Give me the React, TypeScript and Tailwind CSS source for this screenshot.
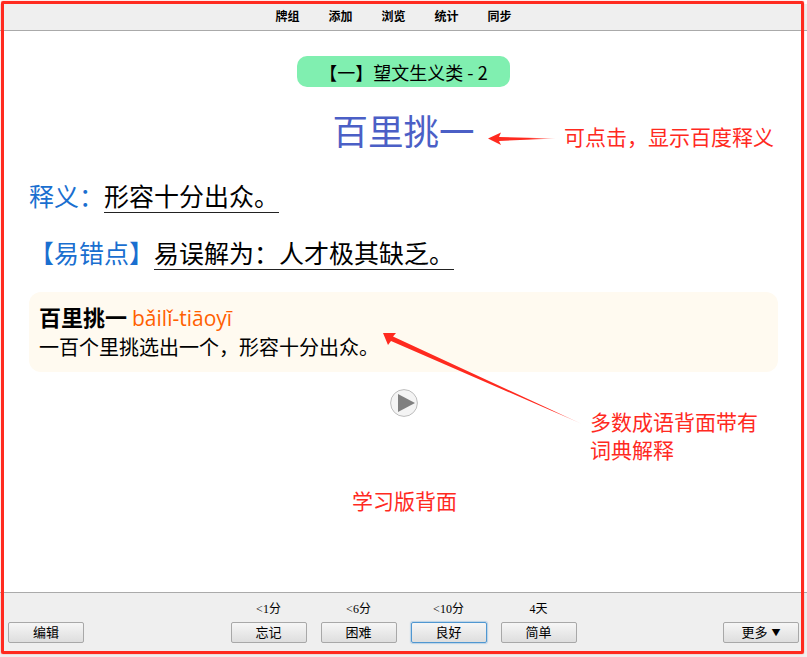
const cjk = "font-['Noto_Sans_CJK_SC','Liberation_Sans',sans-serif]";

const navItems = ["牌组", "添加", "浏览", "统计", "同步"];

const answers = [
  { time: "<1分", label: "忘记", focus: false },
  { time: "<6分", label: "困难", focus: false },
  { time: "<10分", label: "良好", focus: true },
  { time: "4天", label: "简单", focus: false },
];

function Btn({ label, focus, caret }: { label: string; focus?: boolean; caret?: boolean }) {
  return (
    <button
      className={`flex h-[21px] w-[76px] items-center justify-center rounded-[2px] border bg-gradient-to-b from-[#f6f6f6] to-[#dedede] pb-[2px] text-[13px] leading-none text-black ${
        focus ? "border-[#4f97d1] shadow-[0_0_1px_1px_#4f97d155]" : "border-[#a8a8a8]"
      }`}
    >
      {label}
      {caret && <span className="ml-[4px] mt-[2px] text-[9px]">▼</span>}
    </button>
  );
}

export default function App() {
  return (
    <div className={`relative flex h-[657px] w-[807px] flex-col overflow-hidden bg-white ${cjk}`}>
      {/* top toolbar */}
      <nav className="mt-[4px] flex h-[27px] shrink-0 items-center justify-center gap-[29px] border-b border-[#aaaaaa] bg-[#efefef] pr-[20px] pb-[2px] text-[12px] font-bold text-black">
        {navItems.map((item) => (
          <span key={item}>{item}</span>
        ))}
      </nav>

      {/* card */}
      <main className="flex flex-1 flex-col">
        <div className="mt-[25px] flex justify-center">
          <div className="flex h-[31px] w-[213px] items-center justify-center rounded-[10px] bg-[#80efb0] text-[18px] leading-none text-black">
            【一】望文生义类 - 2
          </div>
        </div>

        <div className="mt-[17px] text-center text-[35.5px] leading-[52px] text-[#4b5fc6]">百里挑一</div>

        <div className="mt-[21px] ml-[29px] flex text-[25px] leading-[36px]">
          <span className="text-[#1a6fd0]">释义：</span>
          <span className="h-[36px] w-[175px] border-b border-[#222222] text-black">形容十分出众。</span>
        </div>

        <div className="mt-[21px] ml-[29px] flex text-[25px] leading-[36px]">
          <span className="text-[#1a6fd0]">【易错点】</span>
          <span className="h-[36px] w-[300px] border-b border-[#222222] text-black">易误解为：人才极其缺乏。</span>
        </div>

        <section className="mt-[22px] ml-[29px] flex h-[80px] w-[749px] flex-col rounded-[12px] bg-[#fffaf0] pt-[9px] pl-[10px]">
          <div className="flex items-baseline gap-[5px] leading-[30px]">
            <span className="text-[22px] font-bold text-black">百里挑一</span>
            <span className="font-['Open_Sans',sans-serif] text-[21px] text-[#ff6000]">bǎilǐ-tiāoyī</span>
          </div>
          <div className="text-[20px] leading-[28px] text-black">一百个里挑选出一个，形容十分出众。</div>
        </section>

        <div className="mt-[17px] flex justify-center">
          <svg width="28" height="28" viewBox="0 0 28 28">
            <circle cx="14" cy="14" r="13.4" fill="#f4f4f4" stroke="#bdbdbd" />
            <path d="M8 5 L25 14 L8 23 Z" fill="#808080" />
          </svg>
        </div>
      </main>

      {/* answer bar */}
      <footer className="flex h-[65px] shrink-0 items-end justify-between border-t border-[#aaaaaa] bg-[#efefef] px-[8px] pb-[14px]">
        <Btn label="编辑" />
        <div className="flex gap-[14px]">
          {answers.map((a) => (
            <div key={a.label} className="flex flex-col items-center">
              <span className="mb-[4px] font-['Liberation_Serif','Noto_Sans_CJK_SC',serif] text-[12px] leading-[18px] text-black">
                {a.time}
              </span>
              <Btn label={a.label} focus={a.focus} />
            </div>
          ))}
        </div>
        <Btn label="更多" caret />
      </footer>

      {/* annotations drawn over the screenshot */}
      <div className="pointer-events-none absolute left-[1px] top-[1px] h-[653px] w-[803px] rounded-[2px] border-x-[3px] border-t-[3px] border-b-[3px] border-[#ff2a1f] shadow-[0_0_1px_#ff2a1f]" />

      <span className="absolute left-[564px] top-[121px] text-[21px] leading-[30px] text-[#ff2a1f]">可点击，显示百度释义</span>
      <div className="absolute left-[590px] top-[407px] text-[21px] leading-[28px] text-[#ff2a1f]">
        多数成语背面带有
        <br />
        词典解释
      </div>
      <span className="absolute left-[352px] top-[485px] text-[21px] leading-[30px] text-[#ff2a1f]">学习版背面</span>

      <svg className="pointer-events-none absolute left-0 top-0" width="807" height="657" viewBox="0 0 807 657">
        <defs>
          <linearGradient id="a1" x1="488" y1="0" x2="556" y2="0" gradientUnits="userSpaceOnUse">
            <stop offset="0.6" stopColor="#ff2a1f" />
            <stop offset="1" stopColor="#ff2a1f" stopOpacity="0.2" />
          </linearGradient>
          <linearGradient id="a2" x1="384" y1="333" x2="582" y2="424" gradientUnits="userSpaceOnUse">
            <stop offset="0.85" stopColor="#ff2a1f" />
            <stop offset="1" stopColor="#ff2a1f" stopOpacity="0.25" />
          </linearGradient>
        </defs>
        <path d="M488 138.5 L501 132.5 L499 137 L556 138.5 L499 141 L501 145 Z" fill="url(#a1)" />
        <path d="M383 333 L396 333 L393 336.5 L582 424 L391 341 L388 345 Z" fill="url(#a2)" />
      </svg>
    </div>
  );
}
